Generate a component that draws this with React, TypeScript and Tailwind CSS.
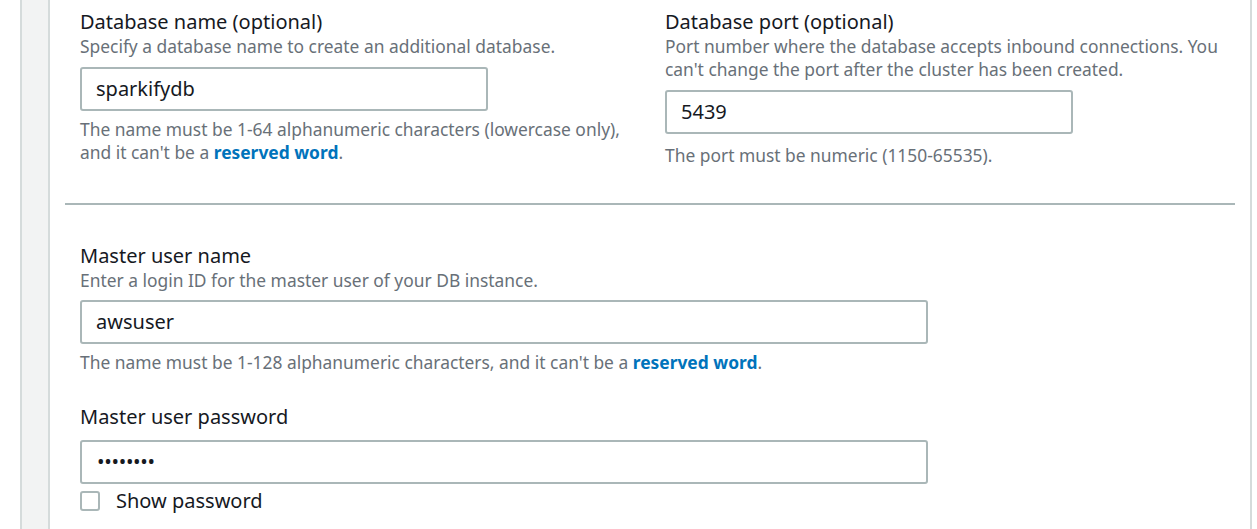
const font = { fontFamily: '"Noto Sans", "Open Sans", Arial, sans-serif' };

function Label({ children }: { children: React.ReactNode }) {
  return <div className="text-[20px] leading-[26px] text-[#16191f]">{children}</div>;
}

function Desc({ children }: { children: React.ReactNode }) {
  return <div className="text-[17.4px] leading-[23px] text-[#687078]">{children}</div>;
}

function Reserved() {
  return <a href="#" className="font-bold text-[#0073bb]">reserved word</a>;
}

function Input({ value, className = '' }: { value: string; className?: string }) {
  return (
    <div className={`h-[44px] border-2 border-[#aab7b8] rounded-[3px] flex items-center px-[14px] text-[20px] text-[#16191f] ${className}`}>
      {value}
    </div>
  );
}

export default function App() {
  return (
    <div className="flex h-[529px] bg-white overflow-hidden" style={font}>
      {/* Left gutter */}
      <div className="w-[20px] bg-white" />
      <div className="w-[30px] bg-[#f2f3f3] border-l-2 border-r-2 border-[#d5dbdb]" />

      {/* Main content */}
      <div className="flex-1 flex flex-col px-[15px]">
        <div className="grid grid-cols-2 gap-x-[30px] px-[15px] pt-[9px] pb-[36px] border-b-2 border-[#aab7b8]">
          <div>
            <Label>Database name (optional)</Label>
            <Desc>Specify a database name to create an additional database.</Desc>
            <Input value="sparkifydb" className="w-[408px] mt-[9px]" />
            <div className="mt-[7px]">
              <Desc>
                The name must be 1-64 alphanumeric characters (lowercase only), and it can't be a <Reserved />.
              </Desc>
            </div>
          </div>
          <div>
            <Label>Database port (optional)</Label>
            <Desc>
              Port number where the database accepts inbound connections. You can't change the port after the cluster has been created.
            </Desc>
            <Input value="5439" className="w-[408px] mt-[9px]" />
            <div className="mt-[10px]">
              <Desc>The port must be numeric (1150-65535).</Desc>
            </div>
          </div>
        </div>

        <div className="px-[15px] pt-[38px]">
          <Label>Master user name</Label>
          <Desc>Enter a login ID for the master user of your DB instance.</Desc>
          <Input value="awsuser" className="w-[848px] mt-[8px]" />
          <div className="mt-[7px]">
            <Desc>
              The name must be 1-128 alphanumeric characters, and it can't be a <Reserved />.
            </Desc>
          </div>

          <div className="mt-[30px]">
            <Label>Master user password</Label>
          </div>
          <div className="mt-[10px] w-[848px] h-[44px] border-2 border-[#aab7b8] rounded-[3px] flex items-center px-[15px] text-[20px] tracking-[-0.3px] text-[#16191f]">
            ••••••••
          </div>
          <label className="flex items-center mt-[6px] gap-[16px]">
            <span className="w-[20px] h-[20px] border-2 border-[#aab7b8] rounded-[3px] bg-white" />
            <span className="text-[20px] leading-[22px] text-[#16191f]">Show password</span>
          </label>
        </div>
      </div>

      {/* Right edge */}
      <div className="w-[7px] bg-white border-l-2 border-[#d5dbdb]" />
    </div>
  );
}
